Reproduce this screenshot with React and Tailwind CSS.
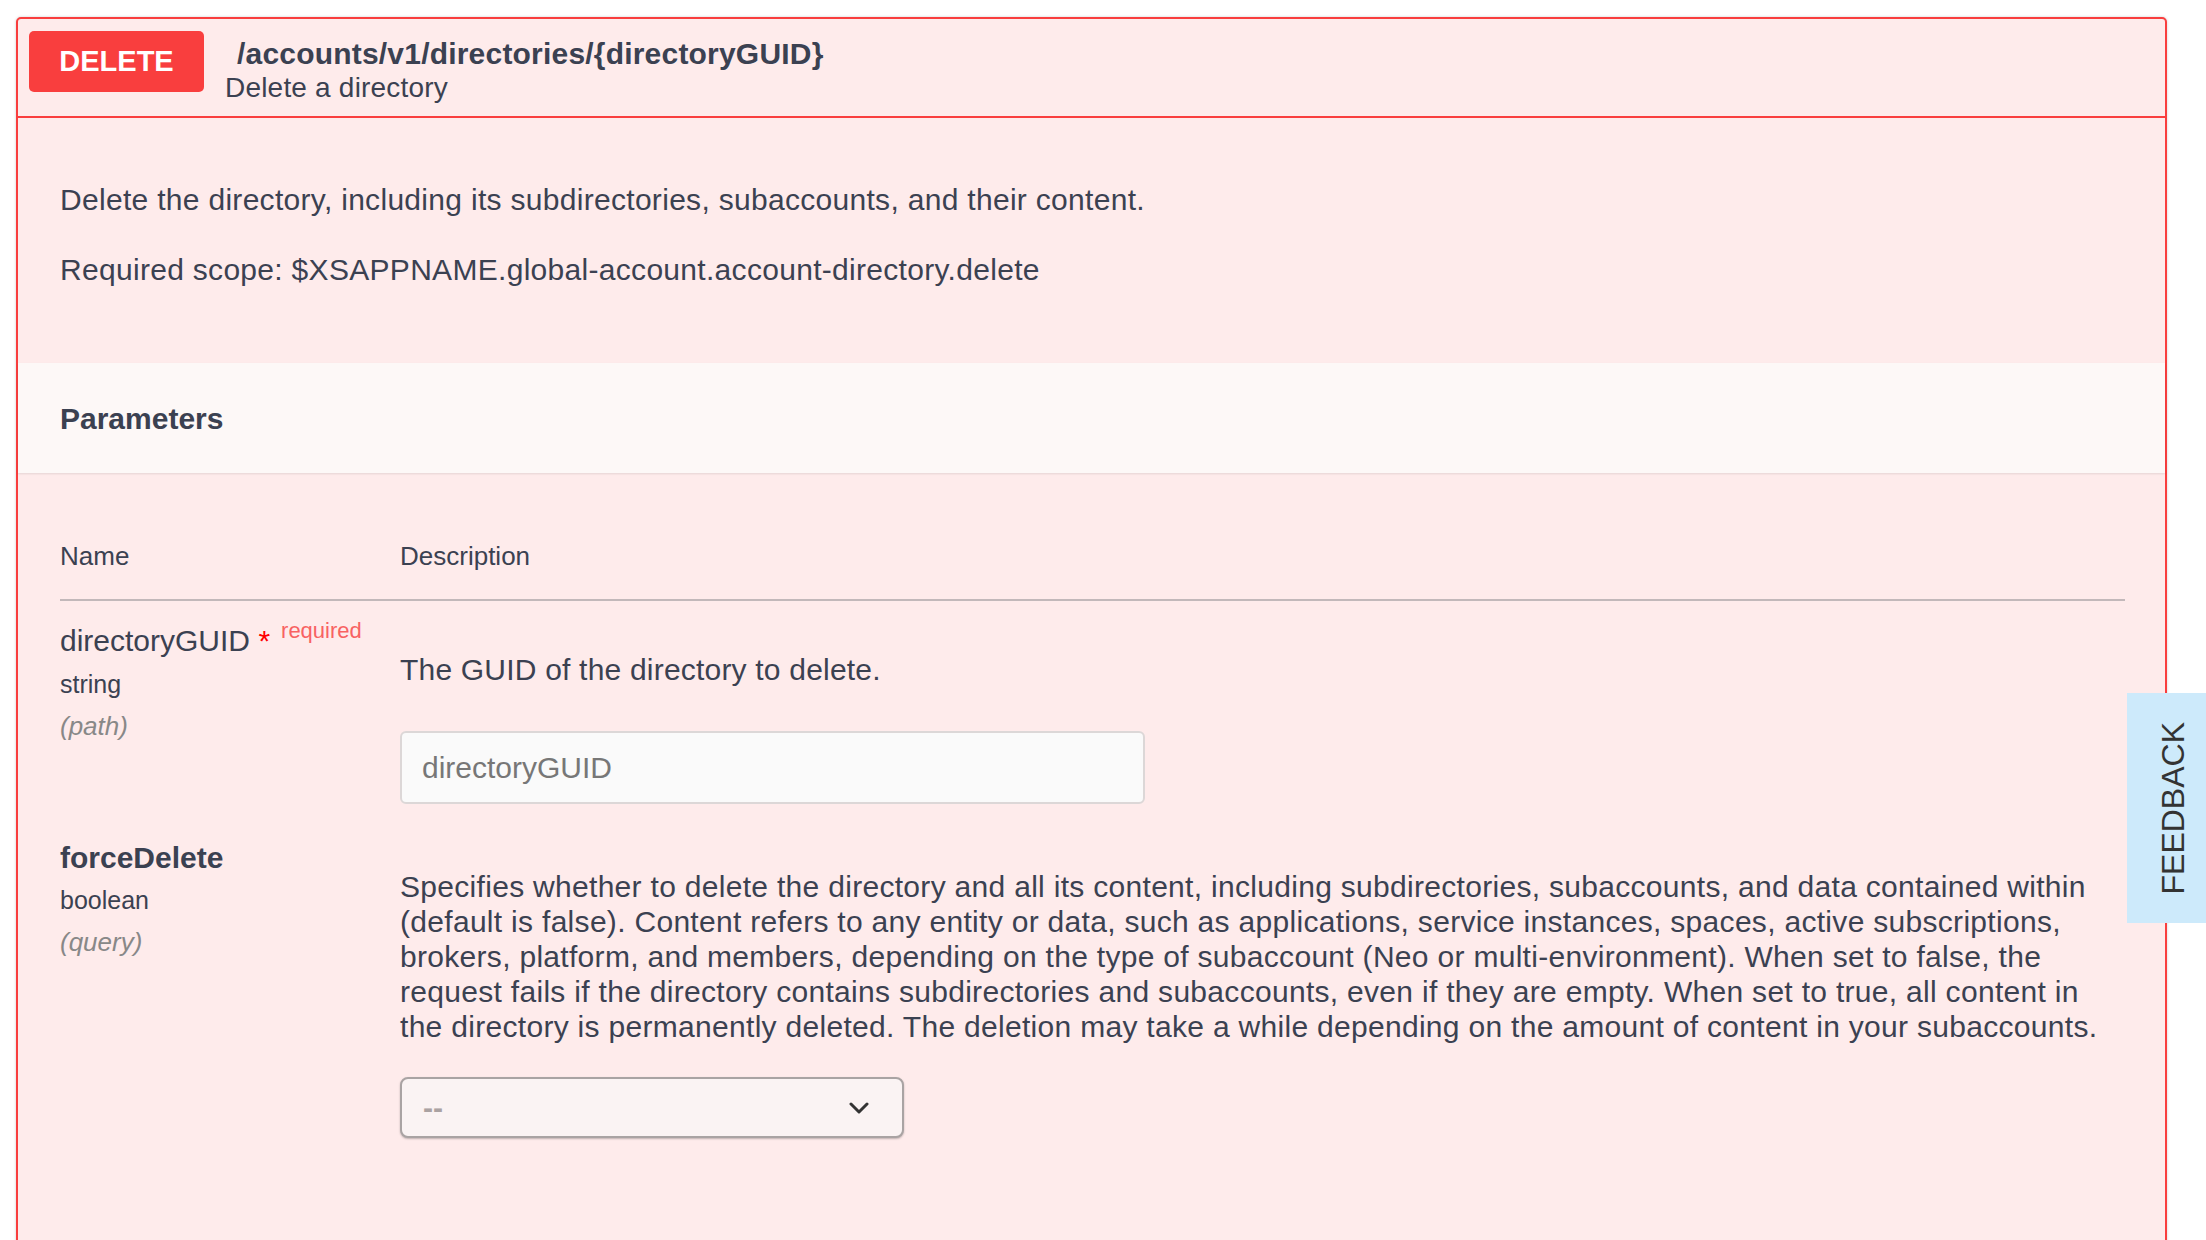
export default function App() {
  const lines = [
    "Specifies whether to delete the directory and all its content, including subdirectories, subaccounts, and data contained within",
    "(default is false). Content refers to any entity or data, such as applications, service instances, spaces, active subscriptions,",
    "brokers, platform, and members, depending on the type of subaccount (Neo or multi-environment). When set to false, the",
    "request fails if the directory contains subdirectories and subaccounts, even if they are empty. When set to true, all content in",
    "the directory is permanently deleted. The deletion may take a while depending on the amount of content in your subaccounts.",
  ];
  return (
    <div className="relative h-[1240px] overflow-hidden bg-white font-['Liberation_Sans',Arial,sans-serif] text-[#3b4151]">
      <div className="pt-[17px] pl-[16px] pr-[39px]">
        <div className="rounded-[5px] border-2 border-[#f93e3e] bg-[#feebeb] shadow-[0_0_3px_rgba(0,0,0,0.19)]">
          {/* Header */}
          <div className="flex items-start border-b-2 border-[#f93e3e] pl-[11px] pt-[12px] pb-[11px]">
            <div className="flex h-[61px] w-[175px] items-center justify-center rounded-[5px] bg-[#f93e3e] text-[29px] font-bold text-white">
              DELETE
            </div>
            <div className="ml-[21px] mt-[6px]">
              <div className="pl-[12px] text-[30px] font-bold leading-[34px] tracking-[0.2px]">/accounts/v1/directories/{"{directoryGUID}"}</div>
              <div className="text-[28px] leading-[34px] tracking-[0.2px]">Delete a directory</div>
            </div>
          </div>

          {/* Description */}
          <div className="pl-[42px] pr-[40px] pt-[62px] pb-[73px] text-[30px] leading-[40px] tracking-[0.3px]">
            <p>Delete the directory, including its subdirectories, subaccounts, and their content.</p>
            <p className="mt-[30px]">Required scope: $XSAPPNAME.global-account.account-directory.delete</p>
          </div>

          {/* Parameters header */}
          <div className="flex h-[110px] items-center bg-[#fdf8f7] pl-[42px] shadow-[0_1px_2px_rgba(0,0,0,0.1)]">
            <h4 className="text-[30px] font-bold">Parameters</h4>
          </div>

          {/* Table */}
          <div className="pl-[42px] pr-[40px] pt-[65px] pb-[150px]">
            <div className="flex border-b-2 border-[#c2b8ba] pb-[25px] text-[26px] leading-[36px]">
              <div className="w-[340px]">Name</div>
              <div>Description</div>
            </div>

            {/* Row 1 */}
            <div className="flex pt-[22px] pb-[14px]">
              <div className="w-[340px] shrink-0">
                <div className="whitespace-nowrap text-[30px] leading-[36px]">
                  directoryGUID <span className="text-[#ff0000]">*</span>
                  <span className="relative -top-[13px] pl-[11px] text-[22px] leading-none text-[#f86262]">required</span>
                </div>
                <div className="mt-[4px] text-[25px] leading-[42px]">string</div>
                <div className="text-[26px] italic leading-[42px] text-[#888888]">(path)</div>
              </div>
              <div className="pt-[27px]">
                <p className="text-[30px] leading-[40px] tracking-[0.2px]">The GUID of the directory to delete.</p>
                <div className="mt-[41px] flex h-[73px] w-[745px] items-center rounded-[6px] border-2 border-[#dcd7d7] bg-[#fafafa] pl-[20px] text-[30px] text-[#777777]">
                  directoryGUID
                </div>
              </div>
            </div>

            {/* Row 2 */}
            <div className="flex pt-[22px] pb-[14px]">
              <div className="w-[340px] shrink-0">
                <div className="text-[30px] font-bold leading-[36px]">forceDelete</div>
                <div className="mt-[3px] text-[25px] leading-[42px]">boolean</div>
                <div className="text-[26px] italic leading-[42px] text-[#888888]">(query)</div>
              </div>
              <div className="pt-[29px]">
                <div className="text-[30px] leading-[35px] tracking-[0.3px]">
                  {lines.map((l) => (
                    <div key={l} className="whitespace-nowrap">{l}</div>
                  ))}
                </div>
                <div className="mt-[33px] flex h-[61px] w-[504px] items-center justify-between rounded-[8px] border-2 border-[#a9a3a3] bg-[#faf3f3] pl-[21px] pr-[33px] shadow-[0_1px_2px_rgba(0,0,0,0.25)]">
                  <span className="text-[30px] font-bold text-[#aaa2a2]">--</span>
                  <svg width="20" height="12" viewBox="0 0 20 12" fill="none">
                    <path d="M2 2 L10 10 L18 2" stroke="#333333" strokeWidth="3" strokeLinecap="round" strokeLinejoin="round" />
                  </svg>
                </div>
              </div>
            </div>
          </div>
        </div>
      </div>

      {/* Feedback tab */}
      <div className="absolute right-0 top-[693px] flex h-[230px] w-[79px] items-center justify-center bg-[#cdeafb] pl-[12px]">
        <span className="rotate-180 text-[32px] leading-none text-[#333333] [writing-mode:vertical-rl]">FEEDBACK</span>
      </div>
    </div>
  );
}
